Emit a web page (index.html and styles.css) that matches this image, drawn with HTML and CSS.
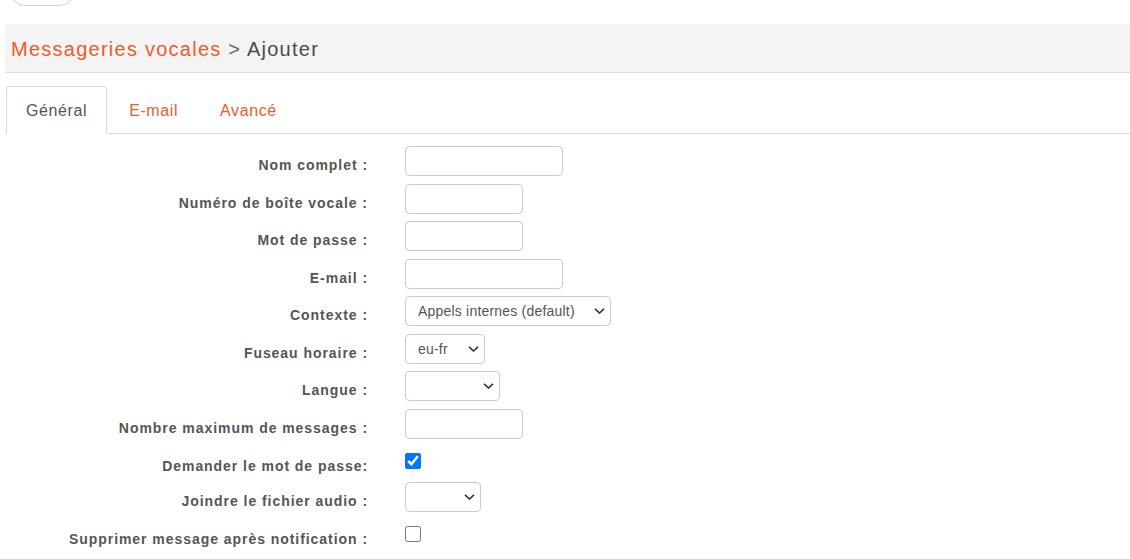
FILE: index.html
```html
<!DOCTYPE html>
<html lang="fr">
<head>
<meta charset="utf-8">
<title>Messageries vocales - Ajouter</title>
<link rel="stylesheet" href="styles.css">
</head>
<body>
<div class="topbar"><button class="pill" type="button"></button></div>
<div class="page">
  <div class="header">
    <h1 class="title"><span class="crumb">Messageries vocales</span> <span class="sep">&gt;</span> <span class="current">Ajouter</span></h1>
  </div>
  <ul class="tabs">
    <li class="tab active">Général</li>
    <li class="tab">E-mail</li>
    <li class="tab">Avancé</li>
  </ul>
  <form class="form">
    <div class="row"><label class="lbl">Nom complet :</label><input class="field w-lg" type="text"></div>
    <div class="row"><label class="lbl">Numéro de boîte vocale :</label><input class="field w-md" type="text"></div>
    <div class="row"><label class="lbl">Mot de passe :</label><input class="field w-md" type="password"></div>
    <div class="row"><label class="lbl">E-mail :</label><input class="field w-lg" type="text"></div>
    <div class="row"><label class="lbl">Contexte :</label>
      <span class="selwrap w-ctx"><select class="sel"><option>Appels internes (default)</option></select><svg class="chev" viewBox="0 0 11 6" width="11" height="6"><path d="M1 0.8 L5.5 5 L10 0.8" fill="none" stroke="#333" stroke-width="1.6"/></svg></span></div>
    <div class="row"><label class="lbl">Fuseau horaire :</label>
      <span class="selwrap w-tz"><select class="sel"><option>eu-fr</option></select><svg class="chev" viewBox="0 0 11 6" width="11" height="6"><path d="M1 0.8 L5.5 5 L10 0.8" fill="none" stroke="#333" stroke-width="1.6"/></svg></span></div>
    <div class="row"><label class="lbl">Langue :</label>
      <span class="selwrap w-lang"><select class="sel"><option></option></select><svg class="chev" viewBox="0 0 11 6" width="11" height="6"><path d="M1 0.8 L5.5 5 L10 0.8" fill="none" stroke="#333" stroke-width="1.6"/></svg></span></div>
    <div class="row"><label class="lbl">Nombre maximum de messages :</label><input class="field w-md" type="text"></div>
    <div class="row row-cb"><label class="lbl">Demander le mot de passe:</label><input class="cb" type="checkbox" checked></div>
    <div class="row"><label class="lbl">Joindre le fichier audio :</label>
      <span class="selwrap w-att"><select class="sel"><option></option></select><svg class="chev" viewBox="0 0 11 6" width="11" height="6"><path d="M1 0.8 L5.5 5 L10 0.8" fill="none" stroke="#333" stroke-width="1.6"/></svg></span></div>
    <div class="row row-cb"><label class="lbl">Supprimer message après notification :</label><input class="cb" type="checkbox"></div>
  </form>
</div>
</body>
</html>
```
FILE: styles.css
```css
* { box-sizing: border-box; }
html, body { margin: 0; padding: 0; background: #fff; }
body {
  font-family: "Liberation Sans", Arial, sans-serif;
  color: #555;
  overflow: hidden;
}
.topbar {
  display: flow-root;
  height: 24px;
  padding-left: 9px;
}
.pill {
  display: block;
  width: 66px;
  height: 32px;
  margin-top: -26px;
  border: 1px solid #cfcfcf;
  border-radius: 16px;
  background: #fff;
}
.page { padding-left: 5px; }
.header {
  height: 49px;
  background: #f4f4f4;
  border-bottom: 1px solid #dcdcdc;
  display: flex;
  align-items: center;
  padding-left: 6px;
}
.title {
  margin: 0;
  font-size: 20px;
  font-weight: normal;
  letter-spacing: 1.25px;
  line-height: 24px;
  padding-top: 1px;
}
.crumb { color: #f15a2b; }
.sep { color: #666; }
.current { color: #4a4a4a; }
.tabs {
  list-style: none;
  margin: 13px 0 0 0;
  padding: 0 0 0 1px;
  display: flex;
  border-bottom: 1px solid #dcdcdc;
}
.tab {
  height: 48px;
  padding: 0 19px;
  margin-right: 2px;
  display: flex;
  align-items: center;
  font-size: 16px;
  letter-spacing: 0.6px;
  color: #f15a2b;
  border: 1px solid transparent;
  border-radius: 4px 4px 0 0;
  margin-bottom: -1px;
  padding-top: 2px;
}
.tab.active {
  color: #555;
  border-color: #dcdcdc;
  border-bottom-color: #fff;
  background: #fff;
}
.form {
  margin-top: 12px;
  display: grid;
  grid-template-columns: 363px auto;
  column-gap: 37px;
  row-gap: 7.5px;
  justify-content: start;
}
.row { display: contents; }
.lbl {
  text-align: right;
  font-size: 14px;
  font-weight: bold;
  letter-spacing: 0.95px;
  line-height: 16px;
  padding-top: 11px;
  color: #555;
  white-space: nowrap;
  height: 30px;
}
.row-cb .lbl { height: 28px; padding-top: 12px; }
.field {
  height: 30px;
  border: 1px solid #ccc;
  border-radius: 4px;
  background: #fff;
  margin: 0;
  padding: 0 8px;
  font: 14px "Liberation Sans", Arial, sans-serif;
  justify-self: start;
}
.w-lg { width: 158px; }
.w-md { width: 118px; }
.selwrap {
  position: relative;
  display: block;
  height: 30px;
  justify-self: start;
}
.sel {
  appearance: none;
  -webkit-appearance: none;
  display: block;
  width: 100%;
  height: 30px;
  border: 1px solid #ccc;
  border-radius: 4px;
  background-color: #fff;
  margin: 0;
  padding: 0 18px 0 12px;
  font: 14px "Liberation Sans", Arial, sans-serif;
  letter-spacing: 0.2px;
  color: #555;
}
.chev {
  position: absolute;
  right: 6px;
  top: 12px;
  pointer-events: none;
}
.w-ctx { width: 206px; }
.w-tz { width: 80px; }
.w-lang { width: 95px; }
.w-att { width: 76px; }
.cb {
  width: 16px;
  height: 16px;
  margin: 7px 0 0 0;
  align-self: start;
  justify-self: start;
}
```
